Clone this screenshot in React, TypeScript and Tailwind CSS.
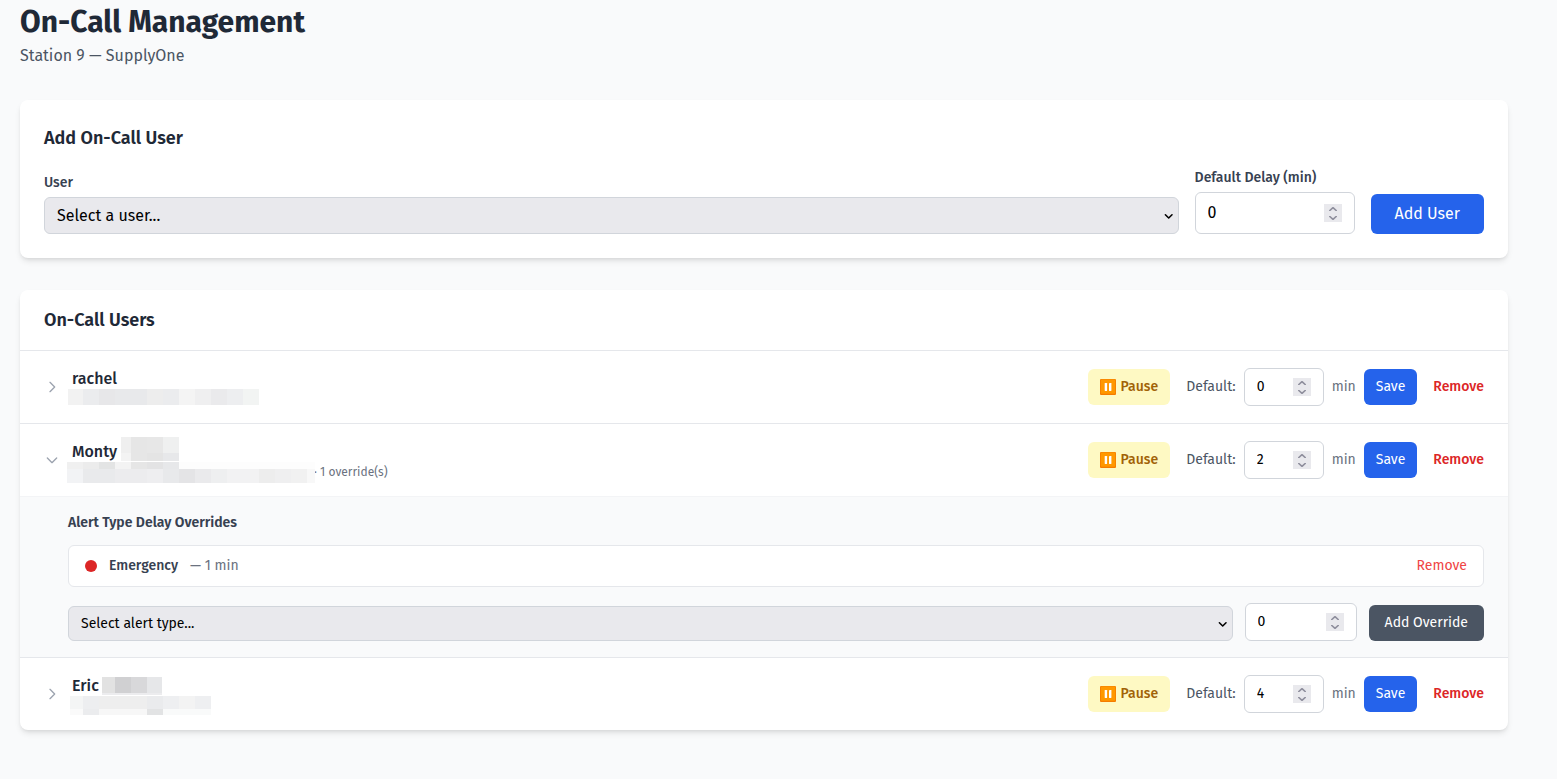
import { useState } from "react";

type Block = [number, number, number, number, string];

type Override = {
  name: string;
  delay: number;
}

type OnCallUser = {
  id: string;
  name: string;
  delay: number;
  overrides: Override[];
  mask: Block[];
}

// x, y, width, height, fill of the blocks hiding the private parts of a user
const rachelMask: Block[] = [
  [1, 25, 15, 16, "#f2f2f2"],
  [16, 25, 16, 16, "#ebecee"],
  [32, 25, 16, 16, "#e7e7e9"],
  [48, 25, 32, 16, "#e8e9eb"],
  [80, 25, 16, 16, "#ededed"],
  [96, 25, 16, 16, "#ebecee"],
  [112, 25, 16, 16, "#f4f4f4"],
  [128, 25, 16, 16, "#efeff0"],
  [144, 25, 16, 16, "#eaeaec"],
  [160, 25, 16, 16, "#edeef0"],
  [176, 25, 16, 16, "#f2f4f3"],
];

const montyMask: Block[] = [
  [54, 0, 10, 16, "#efefef"],
  [64, 0, 16, 24, "#e6e6e6"],
  [80, 0, 16, 16, "#e7e7e7"],
  [96, 0, 16, 16, "#eff0f0"],
  [54, 16, 10, 8, "#f3f3f3"],
  [80, 16, 16, 8, "#e4e4e4"],
  [96, 16, 16, 8, "#e7e8ea"],
  [0, 25, 16, 7, "#f0f0f0"],
  [16, 25, 16, 7, "#ececec"],
  [32, 25, 16, 7, "#e3e4e4"],
  [48, 25, 16, 7, "#f3f3f3"],
  [64, 25, 16, 7, "#e6e6e6"],
  [80, 25, 16, 7, "#e3e3e4"],
  [96, 25, 16, 7, "#e7e8ea"],
  [112, 25, 136, 7, "#fdfdfd"],
  [0, 32, 16, 14, "#f2f3f5"],
  [16, 32, 32, 14, "#e9eaec"],
  [48, 32, 32, 14, "#ececee"],
  [80, 32, 16, 14, "#eeeef0"],
  [96, 32, 16, 14, "#e8e9eb"],
  [112, 32, 16, 14, "#e4e4e6"],
  [128, 32, 16, 14, "#eaeaec"],
  [144, 32, 16, 14, "#eeeff0"],
  [160, 32, 32, 14, "#f2f2f3"],
  [192, 32, 16, 14, "#ededed"],
  [208, 32, 16, 14, "#efeff0"],
  [224, 32, 16, 14, "#f1f1f1"],
  [240, 32, 8, 14, "#f8f8f8"],
];

const ericMask: Block[] = [
  [35, 6, 13, 16, "#e2e2e2"],
  [48, 6, 16, 16, "#d0d0d2"],
  [64, 6, 16, 16, "#d8d8da"],
  [80, 6, 15, 16, "#e6e7e9"],
  [35, 22, 60, 2, "#ececee"],
  [3, 25, 13, 13, "#f4f5f5"],
  [16, 25, 16, 13, "#edeef0"],
  [32, 25, 48, 13, "#eeeeee"],
  [80, 25, 16, 13, "#eaebed"],
  [96, 25, 16, 13, "#eeeff1"],
  [112, 25, 16, 13, "#f3f3f3"],
  [128, 25, 16, 13, "#eeeff1"],
  [3, 38, 13, 6, "#fafafa"],
  [16, 38, 16, 6, "#ebecee"],
  [32, 38, 48, 6, "#f7f7f7"],
  [80, 38, 16, 6, "#e2e3e4"],
  [96, 38, 48, 6, "#f9fafa"],
];

const users: OnCallUser[] = [
  { id: "rachel", name: "rachel", delay: 0, overrides: [], mask: rachelMask },
  { id: "monty", name: "Monty", delay: 2, overrides: [{ name: "Emergency", delay: 1 }], mask: montyMask },
  { id: "eric", name: "Eric", delay: 4, overrides: [], mask: ericMask },
];

function Mask({ blocks }: { blocks: Block[] }) {
  return (
    <svg className="absolute -left-[5px] -top-[3px] w-[248px] h-[46px]" viewBox="0 0 248 46" shapeRendering="crispEdges" aria-hidden="true">
      {blocks.map(([x, y, w, h, fill], index) => (
        <rect key={index} x={x} y={y} width={w} height={h} fill={fill} />
      ))}
    </svg>
  );
}

function PauseIcon() {
  return (
    <svg className="w-4 h-4 shrink-0" viewBox="0 0 16 16" aria-hidden="true">
      <rect width="16" height="16" rx="1" fill="#f57c00" />
      <rect x="0.8" y="0.6" width="14.4" height="14.2" rx="1" fill="#ff9800" />
      <rect x="4.7" y="4" width="2.4" height="8" rx="0.4" fill="#fff" />
      <rect x="9" y="4" width="2.4" height="8" rx="0.4" fill="#fff" />
    </svg>
  );
}

function NumberField({ id, label, value, className }: { id: string; label?: string; value: number; className: string }) {
  const [current, setCurrent] = useState(String(value));
  const step = (by: number) => setCurrent(String(Math.max(0, Number(current) + by)));
  return (
    <div className={`flex items-center justify-between border border-[#d1d5db] rounded-md bg-white px-3 py-2 ${className}`}>
      <input
        id={id}
        type="number"
        min={0}
        aria-label={label}
        value={current}
        onChange={(e) => setCurrent(e.target.value)}
        className="min-w-0 flex-1 bg-transparent text-black outline-none [appearance:textfield] [&::-webkit-inner-spin-button]:appearance-none"
      />
      <div className="flex flex-col w-[18px] h-[18px] shrink-0 bg-[#e9e9ed]">
        <button type="button" aria-label="Increase" tabIndex={-1} onClick={() => step(1)} className="h-[9px] flex justify-center items-center">
          <svg className="w-2 h-1" viewBox="0 0 8 4" fill="none" stroke="#8f8f9d" strokeWidth="1.6" strokeLinecap="round" strokeLinejoin="round">
            <path d="M0.8 3.5L4 0.7L7.2 3.5" />
          </svg>
        </button>
        <button type="button" aria-label="Decrease" tabIndex={-1} onClick={() => step(-1)} className="h-[9px] flex justify-center items-center">
          <svg className="w-2 h-1" viewBox="0 0 8 4" fill="none" stroke="#8f8f9d" strokeWidth="1.6" strokeLinecap="round" strokeLinejoin="round">
            <path d="M0.8 0.5L4 3.3L7.2 0.5" />
          </svg>
        </button>
      </div>
    </div>
  );
}

function SelectField({ id, label, placeholder, options, className }: { id: string; label?: string; placeholder: string; options: string[]; className: string }) {
  return (
    <div className="relative">
      <select
        id={id}
        aria-label={label}
        defaultValue=""
        className={`block w-full appearance-none border border-[#d1d5db] rounded-md bg-[#e9e9ed] text-black px-3 ${className}`}
      >
        <option value="">{placeholder}</option>
        {options.map((option) => (
          <option key={option} value={option}>{option}</option>
        ))}
      </select>
      <svg className="absolute right-1 top-1/2 w-3 h-3 -mt-1 pointer-events-none" viewBox="0 0 12 12" fill="none" stroke="#000" strokeWidth="1.6" strokeLinecap="round" strokeLinejoin="round">
        <path d="M2.4 2.8L5.7 6L9 2.8" />
      </svg>
    </div>
  );
}

function OverridesPanel({ user }: { user: OnCallUser }) {
  return (
    <div className="border-t border-[#f3f4f6] bg-[#f9fafb] pl-12 pr-6 py-4">
      <h3 className="text-sm font-semibold text-[#374151] mb-3">Alert Type Delay Overrides</h3>
      {user.overrides.map((override) => (
        <div key={override.name} className="flex items-center justify-between mb-4 px-4 py-[10px] bg-white border border-[#e5e7eb] rounded-md">
          <div className="flex items-center gap-3 text-sm">
            <span className="w-3 h-3 rounded-full bg-[#dc2626]" />
            <span className="font-medium text-[#374151]">{override.name}</span>
            <span className="text-[#6b7280]">— {override.delay} min</span>
          </div>
          <button type="button" className="text-sm text-[#ef4444]">Remove</button>
        </div>
      ))}
      <div className="flex items-end gap-3">
        <div className="flex-1">
          <SelectField id={`${user.id}-type`} label="Alert type" placeholder="Select alert type..." options={["Emergency", "Warning"]} className="h-[35px] text-sm" />
        </div>
        <NumberField id={`${user.id}-override`} label="Override delay" value={0} className="w-28 text-sm" />
        <button type="button" className="px-4 py-2 bg-[#4b5563] text-white text-sm rounded-md">Add Override</button>
      </div>
    </div>
  );
}

function UserRow({ user, initialOpen }: { user: OnCallUser; initialOpen: boolean }) {
  const [open, setOpen] = useState(initialOpen);
  return (
    <li>
      <div className="flex items-center justify-between px-6 h-[72px]">
        <div className="flex items-center gap-3">
          <button type="button" aria-label="Toggle overrides" aria-expanded={open} onClick={() => setOpen(!open)} className="text-[#9ca3af]">
            <svg className={`w-4 h-4 ${open ? "rotate-90" : ""}`} viewBox="0 0 24 24" fill="none" stroke="currentColor" strokeWidth="2" strokeLinecap="round" strokeLinejoin="round">
              <path d="M9 5l7 7-7 7" />
            </svg>
          </button>
          <div className="relative">
            <p className="font-medium text-[#1f2937]">{user.name}</p>
            <p className="h-4 pl-[242px] text-xs text-[#6b7280]">
              {user.overrides.length > 0 && <>· {user.overrides.length} override(s)</>}
            </p>
            <Mask blocks={user.mask} />
          </div>
        </div>
        <div className="flex items-center gap-4 text-sm">
          <button type="button" className="flex items-center justify-center gap-1 w-[82px] py-2 bg-[#fef9c3] text-[#a16207] font-medium rounded-md">
            <PauseIcon />
            Pause
          </button>
          <div className="flex items-center gap-2">
            <label htmlFor={`${user.id}-delay`} className="text-[#4b5563] whitespace-nowrap">Default:</label>
            <NumberField id={`${user.id}-delay`} value={user.delay} className="w-20" />
            <span className="text-[#6b7280]">min</span>
            <button type="button" className="px-3 py-2 bg-[#2563eb] text-white rounded-md">Save</button>
          </div>
          <button type="button" className="text-[#dc2626] font-medium">Remove</button>
        </div>
      </div>
      {open && <OverridesPanel user={user} />}
    </li>
  );
}

export default function App() {
  return (
    <div className="min-h-screen bg-[#f9fafb] pt-1 pb-8 pl-5 pr-[49px] font-['Fira_Sans','Roboto',sans-serif]">
      <h1 className="text-3xl font-bold text-[#1f2937]">On-Call Management</h1>
      <p className="mt-1 mb-8 text-[#4b5563]">Station 9 — SupplyOne</p>

      <section className="mb-8 p-6 bg-white rounded-lg shadow-md">
        <h2 className="mb-4 text-lg font-semibold text-[#1f2937]">Add On-Call User</h2>
        <form className="flex items-end gap-4" onSubmit={(e) => e.preventDefault()}>
          <div className="flex-1">
            <label htmlFor="user" className="block mb-1 text-sm font-medium text-[#374151]">User</label>
            <SelectField id="user" placeholder="Select a user..." options={users.map((user) => user.name)} className="h-[37px]" />
          </div>
          <div>
            <label htmlFor="delay" className="block mb-1 text-sm font-medium text-[#374151]">Default Delay (min)</label>
            <NumberField id="delay" value={0} className="w-40" />
          </div>
          <button type="submit" className="px-6 py-2 bg-[#2563eb] text-white rounded-md">Add User</button>
        </form>
      </section>

      <section className="bg-white rounded-lg shadow-md">
        <h2 className="px-6 py-4 border-b border-[#e5e7eb] text-lg font-semibold text-[#1f2937]">On-Call Users</h2>
        <ul className="divide-y divide-[#e5e7eb]">
          {users.map((user) => (
            <UserRow key={user.id} user={user} initialOpen={user.overrides.length > 0} />
          ))}
        </ul>
      </section>
    </div>
  );
}
